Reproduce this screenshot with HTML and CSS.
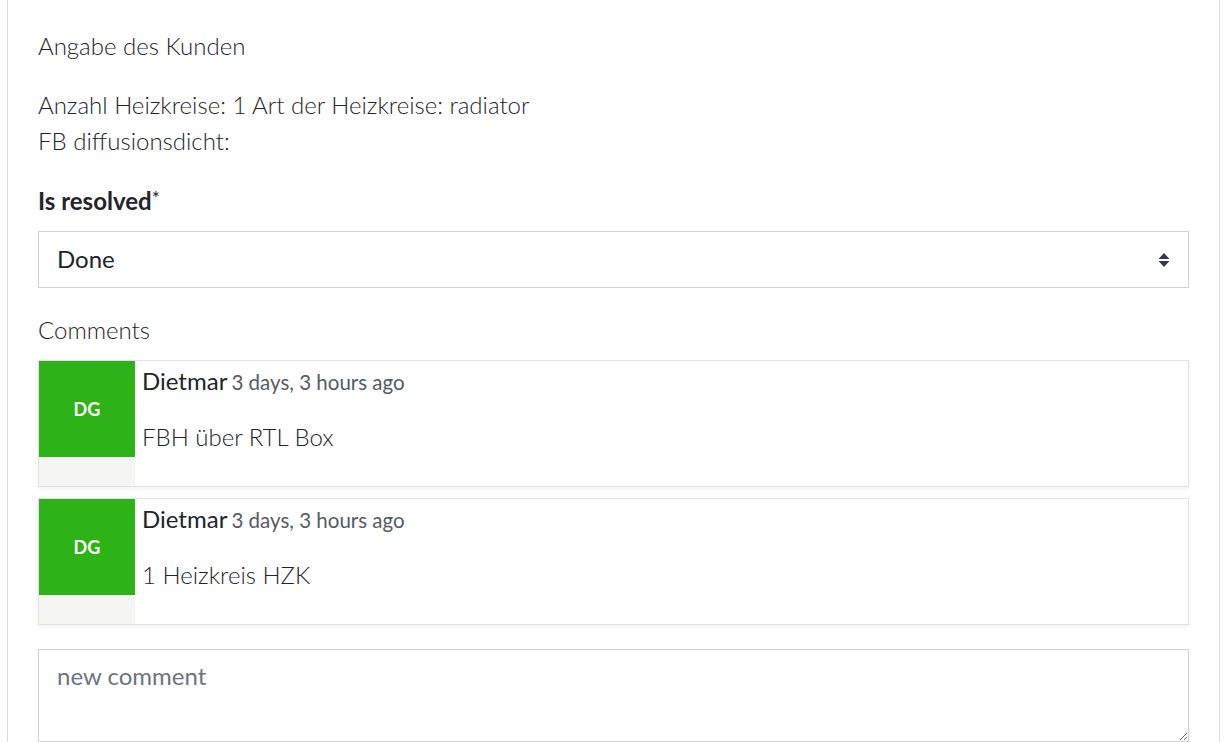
FILE: index.html
```html
<!DOCTYPE html>
<html>
<head>
<meta charset="utf-8">
<link rel="stylesheet" href="styles.css">
</head>
<body>
<div class="card">
  <p class="intro">Angabe des Kunden</p>
  <p class="details">Anzahl Heizkreise: 1 Art der Heizkreise: radiator<br>FB diffusionsdicht:</p>
  <label class="field-label">Is resolved<span class="req">*</span></label>
  <div class="select">
    <span class="select-value">Done</span>
    <svg class="select-arrow" width="12" height="16" viewBox="0 0 12 16"><path d="M6 1 L11.5 7 H0.5 Z M0.5 9 H11.5 L6 15 Z" fill="#343a40"/></svg>
  </div>
  <div class="comments-label">Comments</div>
  <div class="comment">
    <div class="avatar-col"><div class="avatar">DG</div></div>
    <div class="comment-body">
      <div class="comment-head"><span class="author">Dietmar</span> <span class="time">3 days, 3 hours ago</span></div>
      <div class="comment-text">FBH über RTL Box</div>
    </div>
  </div>
  <div class="comment">
    <div class="avatar-col"><div class="avatar">DG</div></div>
    <div class="comment-body">
      <div class="comment-head"><span class="author">Dietmar</span> <span class="time">3 days, 3 hours ago</span></div>
      <div class="comment-text">1 Heizkreis HZK</div>
    </div>
  </div>
  <textarea class="new-comment" placeholder="new comment"></textarea>
</div>
</body>
</html>
```

FILE: styles.css
```css
html, body {
  margin: 0;
  padding: 0;
  background: #fff;
}
body {
  font-family: Lato, "Open Sans", sans-serif;
  color: #212529;
  padding: 0 10px 0 7px;
  height: 742px;
  overflow: hidden;
}
.card {
  border-left: 1px solid #dcdcdc;
  border-right: 1px solid #dcdcdc;
  padding: 28px 30px 0 30px;
  height: 742px;
  box-sizing: border-box;
  overflow: hidden;
}
.intro, .details {
  margin: 0;
  font-weight: 300;
  font-size: 24px;
  line-height: 36px;
}
.intro { margin-bottom: 23px; }
.details { margin-bottom: 24px; }
.field-label {
  display: block;
  font-weight: 700;
  font-size: 24px;
  line-height: 30px;
  margin-bottom: 15px;
}
.req { font-weight: 400; font-size: 19px; vertical-align: 5px; color: #212529; }
.select {
  height: 57px;
  box-sizing: border-box;
  border: 1px solid #ced4da;
  display: flex;
  align-items: center;
  justify-content: space-between;
  padding: 0 18px 2px 18px;
}
.select-arrow { margin-top: 2px; }
.select-value {
  font-size: 24px;
  font-weight: 400;
}
.comments-label {
  margin-top: 27px;
  font-weight: 300;
  font-size: 24px;
  line-height: 30px;
  margin-bottom: 15px;
}
.comment {
  display: flex;
  border: 1px solid #dfe2e6;
  box-shadow: 0 2px 4px rgba(0,0,0,0.06);
  height: 127px;
  box-sizing: border-box;
  margin-bottom: 11px;
}
.avatar-col {
  width: 96px;
  background: #f5f5f4;
  flex: none;
}
.avatar {
  width: 96px;
  height: 96px;
  background: #2db217;
  color: #fff;
  font-weight: 700;
  font-size: 18px;
  display: flex;
  align-items: center;
  justify-content: center;
}
.comment-body {
  padding: 5px 7px;
}
.comment-head {
  line-height: 30px;
}
.author {
  font-size: 24px;
  font-weight: 400;
  color: #212529;
}
.time {
  font-size: 20.5px;
  color: #555b61;
}
.comment-text {
  margin-top: 23px;
  font-weight: 300;
  font-size: 24px;
  line-height: 30px;
}
.new-comment {
  display: block;
  width: 100%;
  box-sizing: border-box;
  margin-top: 24px;
  height: 93px;
  border: 1px solid #ced4da;
  border-radius: 0;
  padding: 11px 18px;
  font-family: Lato, sans-serif;
  font-size: 24px;
  resize: vertical;
  outline: none;
}
.new-comment::placeholder {
  color: #6c757d;
}
```
